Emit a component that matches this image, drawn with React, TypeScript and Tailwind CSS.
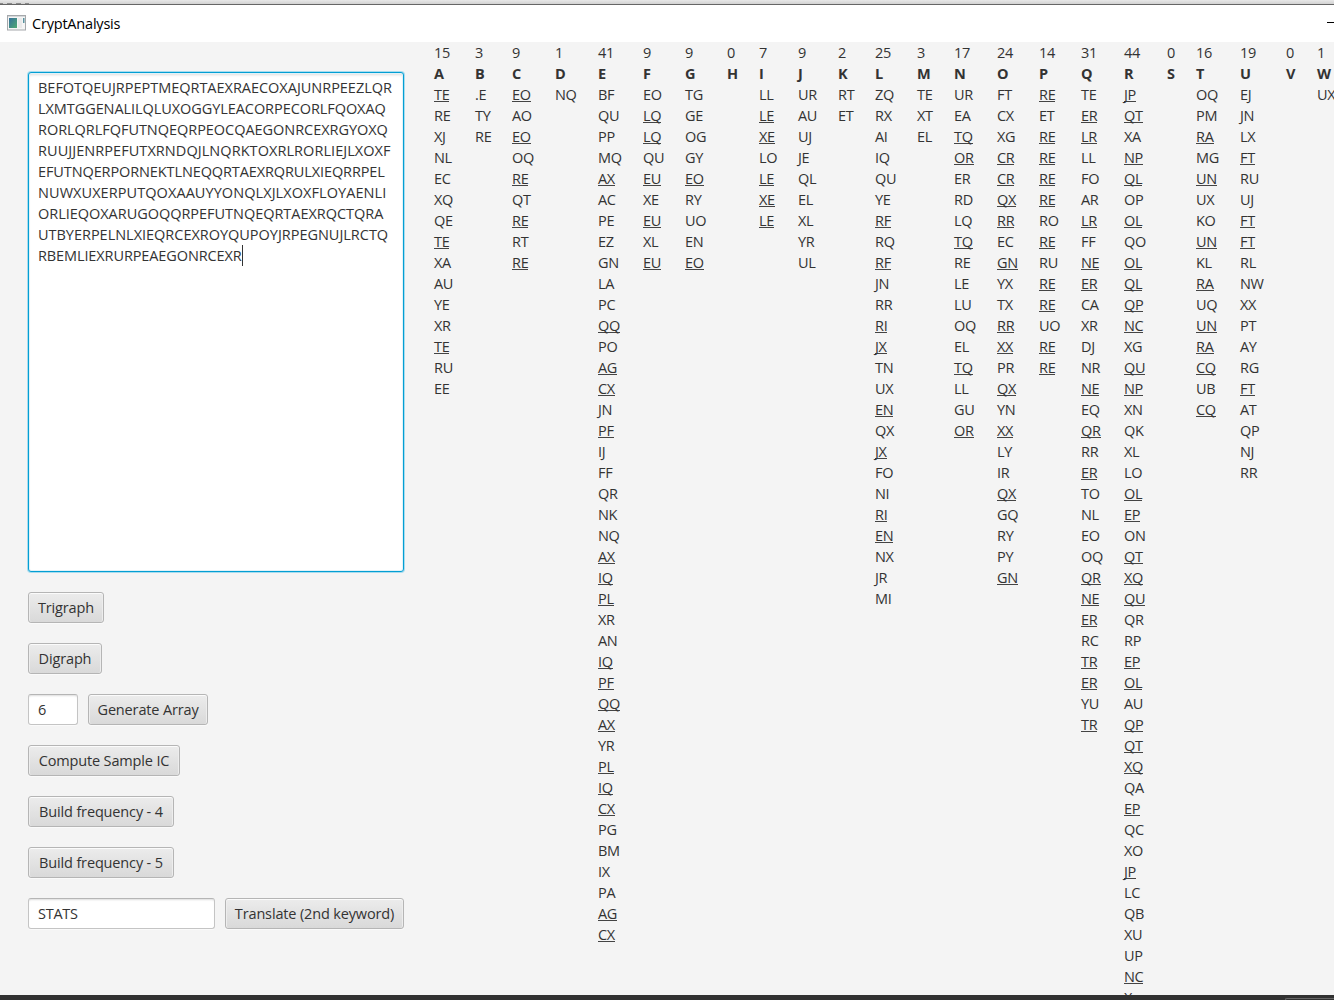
import React from "react";

type Column = { letter: string; width: string; pairs: string };

const columns: Column[] = [
  { letter: "A", width: "w-[41px]", pairs: "TE RE XJ NL EC XQ QE TE XA AU YE XR TE RU EE" },
  { letter: "B", width: "w-[37px]", pairs: ".E TY RE" },
  { letter: "C", width: "w-[43px]", pairs: "EO AO EO OQ RE QT RE RT RE" },
  { letter: "D", width: "w-[43px]", pairs: "NQ" },
  {
    letter: "E",
    width: "w-[45px]",
    pairs:
      "BF QU PP MQ AX AC PE EZ GN LA PC QQ PO AG CX JN PF IJ FF QR NK NQ AX IQ PL XR AN IQ PF QQ AX YR PL IQ CX PG BM IX PA AG CX",
  },
  { letter: "F", width: "w-[42px]", pairs: "EO LQ LQ QU EU XE EU XL EU" },
  { letter: "G", width: "w-[42px]", pairs: "TG GE OG GY EO RY UO EN EO" },
  { letter: "H", width: "w-[32px]", pairs: "" },
  { letter: "I", width: "w-[39px]", pairs: "LL LE XE LO LE XE LE" },
  { letter: "J", width: "w-[40px]", pairs: "UR AU UJ JE QL EL XL YR UL" },
  { letter: "K", width: "w-[37px]", pairs: "RT ET" },
  {
    letter: "L",
    width: "w-[42px]",
    pairs: "ZQ RX AI IQ QU YE RF RQ RF JN RR RI JX TN UX EN QX JX FO NI RI EN NX JR MI",
  },
  { letter: "M", width: "w-[37px]", pairs: "TE XT EL" },
  { letter: "N", width: "w-[43px]", pairs: "UR EA TQ OR ER RD LQ TQ RE LE LU OQ EL TQ LL GU OR" },
  {
    letter: "O",
    width: "w-[42px]",
    pairs: "FT CX XG CR CR QX RR EC GN YX TX RR XX PR QX YN XX LY IR QX GQ RY PY GN",
  },
  { letter: "P", width: "w-[42px]", pairs: "RE ET RE RE RE RE RO RE RU RE RE UO RE RE" },
  {
    letter: "Q",
    width: "w-[43px]",
    pairs:
      "TE ER LR LL FO AR LR FF NE ER CA XR DJ NR NE EQ QR RR ER TO NL EO OQ QR NE ER RC TR ER YU TR",
  },
  {
    letter: "R",
    width: "w-[43px]",
    pairs:
      "JP QT XA NP QL OP OL QO OL QL QP NC XG QU NP XN QK XL LO OL EP ON QT XQ QU QR RP EP OL AU QP QT XQ QA EP QC XO JP LC QB XU UP NC X.",
  },
  { letter: "S", width: "w-[29px]", pairs: "" },
  { letter: "T", width: "w-[44px]", pairs: "OQ PM RA MG UN UX KO UN KL RA UQ UN RA CQ UB CQ" },
  { letter: "U", width: "w-[46px]", pairs: "EJ JN LX FT RU UJ FT FT RL NW XX PT AY RG FT AT QP NJ RR" },
  { letter: "V", width: "w-[31px]", pairs: "" },
  { letter: "W", width: "w-[43px]", pairs: "UX" },
];

const cipherLines: { text: string; tracking: string }[] = [
  { text: "BEFOTQEUJRPEPTMEQRTAEXRAECOXAJUNRPEEZLQR", tracking: "tracking-[-0.02px]" },
  { text: "LXMTGGENALILQLUXOGGYLEACORPECORLFQOXAQ", tracking: "tracking-[-0.07px]" },
  { text: "RORLQRLFQFUTNQEQRPEOCQAEGONRCEXRGYOXQ", tracking: "tracking-[-0.04px]" },
  { text: "RUUJJENRPEFUTXRNDQJLNQRKTOXRLRORLIEJLXOXF", tracking: "tracking-[0.06px]" },
  { text: "EFUTNQERPORNEKTLNEQQRTAEXRQRULXIEQRRPEL", tracking: "tracking-[-0.11px]" },
  { text: "NUWXUXERPUTQOXAAUYYONQLXJLXOXFLOYAENLI", tracking: "tracking-[0.07px]" },
  { text: "ORLIEQOXARUGOQQRPEFUTNQEQRTAEXRQCTQRA", tracking: "tracking-[-0.03px]" },
  { text: "UTBYERPELNLXIEQRCEXROYQUPOYJRPEGNUJLRCTQ", tracking: "tracking-[-0.02px]" },
  { text: "RBEMLIEXRURPEAEGONRCEXR", tracking: "tracking-[-0.11px]" },
];

function Tally({ letter, width, pairs }: Column) {
  const list = pairs ? pairs.split(" ") : [];
  return (
    <div className={`${width} shrink-0 whitespace-nowrap leading-[21px]`}>
      <div className="tracking-[-0.3px]">{list.length}</div>
      <div className="font-bold">{letter}</div>
      {list.map((pair, i) => (
        <div key={i} className="h-[21px]">
          <span
            className={
              list.filter((p) => p === pair).length > 1
                ? "inline-block h-[18px] border-b border-[#444] align-top"
                : "inline-block align-top"
            }
          >
            {pair}
          </span>
        </div>
      ))}
    </div>
  );
}

function FxButton({ width, children }: { width: string; children: React.ReactNode }) {
  return (
    <button
      className={`${width} h-[31px] shrink-0 whitespace-nowrap rounded-[3px] border border-[#b5b5b5] bg-linear-to-b from-[#ececec] to-[#d9d9d9] text-center leading-[29px] tracking-[-0.15px] shadow-[inset_0_1px_0_#fbfbfb,inset_1px_0_0_#ededed,inset_-1px_0_0_#ededed,0_1px_0_#fafafa]`}
    >
      {children}
    </button>
  );
}

function FxField({ width, value }: { width: string; value: string }) {
  return (
    <div
      className={`${width} h-[31px] shrink-0 rounded-[3px] border border-[#c4c4c4] border-t-[#b5b5b5] bg-white pl-[9px] leading-[29px] tracking-[-0.25px] shadow-[inset_0_2px_2px_-1px_#ddd,0_1px_0_#fafafa]`}
    >
      {value}
    </div>
  );
}

export default function App() {
  return (
    <div className="flex h-[1000px] w-[1334px] flex-col overflow-hidden bg-[#f4f4f4] font-['Open_Sans',sans-serif] text-[14.5px] tracking-[-0.3px] text-[#333]">
      <div className="flex h-[4px] shrink-0 items-end gap-[4px] overflow-hidden bg-linear-to-b from-[#e8e8e8] to-[#d2d2d2]">
        <span className="h-px w-[3px] bg-[#8a8a8a]" />
        <span className="h-px w-[5px] bg-[#8a8a8a]" />
        <span className="h-px w-[5px] bg-[#8a8a8a]" />
        <span className="h-px w-[4px] bg-[#8a8a8a]" />
      </div>
      <header className="flex h-[38px] shrink-0 items-center justify-between border-t border-[#666] bg-white">
        <div className="flex items-center text-black">
          <svg width="19" height="16" viewBox="0 0 19 16" className="ml-[7px] mt-[-2px]">
            <defs>
              <linearGradient id="pane" x1="0" y1="0" x2="1" y2="1">
                <stop offset="0" stopColor="#36709b" />
                <stop offset="1" stopColor="#4faa72" />
              </linearGradient>
            </defs>
            <rect x="0.5" y="0.5" width="18" height="14.5" fill="#f5f5f5" stroke="#a5a8ab" />
            <rect x="1" y="1" width="17" height="1" fill="#d5d8da" />
            <rect x="2" y="3" width="8" height="10" fill="url(#pane)" />
            <rect x="11" y="3" width="4" height="10" fill="#eaeaea" />
            <rect x="16" y="3" width="1.5" height="5" fill="#5a93a0" />
          </svg>
          <span className="ml-[6px] text-[14.5px] tracking-[-0.2px]">CryptAnalysis</span>
        </div>
        <div className="mb-[2px] h-px w-[7px] bg-black" />
      </header>
      <main className="flex h-[953px] shrink-0 overflow-hidden">
        <section className="flex w-[434px] shrink-0 flex-col gap-5 pl-7 pt-[30px]">
          <div className="h-[500px] w-[376px] shrink-0 rounded-[3px] border border-[#039ed3] bg-white px-[9px] pt-[4px] leading-[21px] shadow-[0_0_0_1px_#a8dcee,inset_0_0_0_1px_#e1f2f8,inset_0_3px_3px_-1px_#ddd]">
            {cipherLines.map((line, i) => (
              <div key={line.text} className={`flex items-center whitespace-nowrap ${line.tracking}`}>
                {line.text}
                {i === cipherLines.length - 1 && <span className="h-[21px] w-px bg-[#333]" />}
              </div>
            ))}
          </div>
          <FxButton width="w-[76px]">Trigraph</FxButton>
          <FxButton width="w-[74px]">Digraph</FxButton>
          <div className="flex gap-[10px]">
            <FxField width="w-[50px]" value="6" />
            <FxButton width="w-[120px]">Generate Array</FxButton>
          </div>
          <FxButton width="w-[152px]">Compute Sample IC</FxButton>
          <FxButton width="w-[146px]">Build frequency - 4</FxButton>
          <FxButton width="w-[146px]">Build frequency - 5</FxButton>
          <div className="flex gap-[10px]">
            <FxField width="w-[187px]" value="STATS" />
            <FxButton width="w-[179px]">Translate (2nd keyword)</FxButton>
          </div>
        </section>
        <section className="flex">
          {columns.map((c) => (
            <Tally key={c.letter} {...c} />
          ))}
        </section>
      </main>
      <footer className="flex h-[5px] shrink-0 items-end justify-end bg-[#313131]">
        <div className="h-[2px] w-[49px] rounded-tl-[2px] border-l border-t border-[#666]" />
      </footer>
    </div>
  );
}
